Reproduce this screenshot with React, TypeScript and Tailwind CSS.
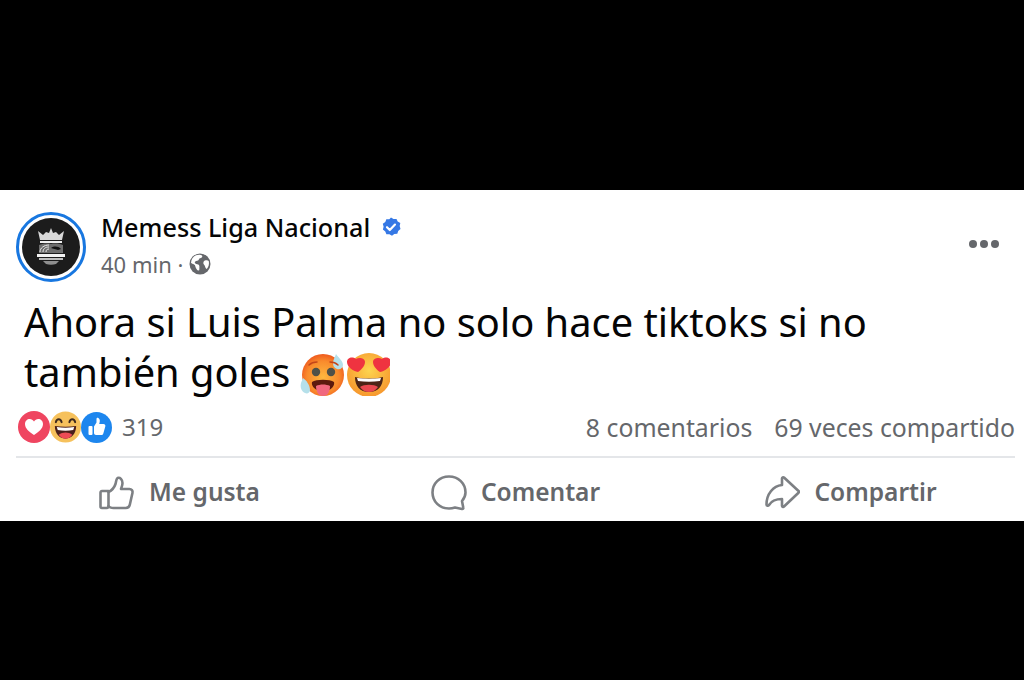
import { ReactNode } from "react";

const font = { fontFamily: '"Noto Sans", "Open Sans", sans-serif' };

function Avatar() {
  return (
    <div className="flex h-[70px] w-[70px] shrink-0 items-center justify-center rounded-full border-[3px] border-[#1877e0] bg-white">
      <div className="flex h-[58px] w-[58px] items-center justify-center rounded-full bg-[#1c1c1c]">
        <svg viewBox="0 0 30 38" className="h-[38px] w-[30px] blur-[0.4px]">
          <path d="M2 3l5 4 3-3 3 1 2-5 2 5 3-1 3 3 5-4-2 9H4z" fill="#d8d8d8" />
          <path d="M4 13h22v2H4z" fill="#f0f0f0" />
          <path d="M3 17c2-1 8-2 12-1 4-1 10 0 12 1v8H3z" fill="#6e6e6e" />
          <path d="M4 24c0-4 4-7 9-7M7 24c0-3 2-5 6-5M10 24c0-2 1-3 3-3" stroke="#e8e8e8" strokeWidth="1" fill="none" />
          <path d="M15 20c3-2 7-2 10 1l-3 1c-2-1-5-1-7-2z" fill="#111" />
          <rect x="1" y="26" width="28" height="3" fill="#f2f2f2" />
          <rect x="3" y="30" width="24" height="2" fill="#bdbdbd" />
          <path d="M7 33h16l-3 3c-3 1-7 1-10 0z" fill="#8f8f8f" />
        </svg>
      </div>
    </div>
  );
}

function VerifiedBadge() {
  return (
    <svg viewBox="0 0 20 20" className="h-[20px] w-[20px]">
      <path
        d="M10 0.5l2.500 1.600 3-.2 1.200 2.700 2.600 1.500-.6 2.900.8 2.900-2.300 2-.9 2.800-3 .2-2.300 1.900-2.600-1.500-3-.1-1.100-2.800-2.400-1.800.7-2.900-.8-2.900 2.500-1.700 1-2.800 3 0z"
        fill="#3578e5"
      />
      <path d="M6 10.200l2.800 2.800 5.200-5.400" fill="none" stroke="#fff" strokeWidth="2.200" strokeLinecap="round" strokeLinejoin="round" />
    </svg>
  );
}

function Globe() {
  return (
    <svg viewBox="0 0 22 22" className="h-[22px] w-[22px]">
      <circle cx="11" cy="11" r="10.500" fill="#65676b" />
      <path d="M7 2.200c2.500-.9 5-.6 6 .2 1 1.200-.5 2.600-2 2.800-1 .2-1 1.600-2 2.200-1 .6-2.800.3-3.200 1.600-.3 1 1 2 2.400 2.200 1.600.2 2.400 1.200 2.200 2.800-.2 1.400.4 3.600-.8 3.600-1.500 0-3-2.600-3.400-4.600C6.400 11.500 3.600 11 2 10 2.200 6.500 4 3.400 7 2.200z" fill="#fff" />
      <path d="M16 7.500c1.200-.4 3-.2 3.800.8.600 2.800-.2 5.700-2 7.700-1.200-.3-1.500-2-2-3.200-.5-1.200-1.800-2-1.400-3.400.3-1 .6-1.600 1.600-1.900z" fill="#fff" />
    </svg>
  );
}

function Dots() {
  return (
    <div className="flex gap-[3px]">
      <span className="h-[8px] w-[8px] rounded-full bg-[#65676b]" />
      <span className="h-[8px] w-[8px] rounded-full bg-[#65676b]" />
      <span className="h-[8px] w-[8px] rounded-full bg-[#65676b]" />
    </div>
  );
}

function SweatHotFace() {
  return (
    <svg viewBox="0 -3 46 48" className="h-[48px] w-[46px]">
      <defs>
        <radialGradient id="hot" cx="50%" cy="55%" r="55%">
          <stop offset="0%" stopColor="#fdb83f" />
          <stop offset="70%" stopColor="#f98a2c" />
          <stop offset="100%" stopColor="#ef5a1e" />
        </radialGradient>
      </defs>
      <circle cx="25" cy="24" r="21" fill="url(#hot)" />
      <path d="M38 3c2 3 7 7 7 11 0 3-3 5-6 4-3-1-4-3-4-6 0-3 2-6 3-9z" fill="#b5e0ea" />
      <path d="M5 27c3 2 7 7 7 12 0 3-3 4-5 3-4-2-5-6-4-10z" fill="#b5e0ea" />
      <circle cx="18" cy="21" r="4.200" fill="#4f5148" />
      <circle cx="33" cy="21" r="4.200" fill="#4f5148" />
      <path d="M11 14c2-2 5-3 8-3M40 14c-2-2-5-3-8-3" stroke="#c4461a" strokeWidth="1.500" fill="none" strokeLinecap="round" />
      <path d="M14 31c4-3 18-3 22 0 1 4-3 7-5 8H19c-2-1-6-4-5-8z" fill="#5c1a0e" />
      <path d="M18 35c4-2 10-2 14 0 0 5-2 10-7 10s-7-5-7-10z" fill="#f0687f" />
    </svg>
  );
}

function HeartEyesFace() {
  return (
    <svg viewBox="0 -3 46 48" className="h-[48px] w-[46px]">
      <defs>
        <radialGradient id="yel" cx="50%" cy="40%" r="65%">
          <stop offset="0%" stopColor="#fdd44f" />
          <stop offset="100%" stopColor="#f6922a" />
        </radialGradient>
      </defs>
      <circle cx="25" cy="24" r="22" fill="url(#yel)" />
      <path d="M14 21C9 20 3 16 3 11c0-4 5-6 9-3 3-2 9-1 9 3 0 4-4 8-7 10z" fill="#ef3340" />
      <path d="M36 21c5-1 11-5 11-10 0-4-5-6-9-3-3-2-9-1-9 3 0 4 4 8 7 10z" fill="#ef3340" />
      <path d="M11 26c9 2 19 2 28 0 0 9-5 15-14 15s-14-6-14-15z" fill="#4c2416" />
      <path d="M16 36c4-3 14-3 18 0-2 3-5 5-9 5s-7-2-9-5z" fill="#e9484f" />
      <path d="M13 27c8 1 16 1 24 0l-1 3c-7 1-15 1-22 0z" fill="#fff" />
    </svg>
  );
}

function LoveReaction() {
  return (
    <div className="flex h-[32px] w-[32px] items-center justify-center rounded-full bg-[#ef4560]">
      <svg viewBox="0 0 20 20" className="h-[20px] w-[20px]">
        <path d="M10 18C5 14.500 1 11.500 1 7c0-3 2.200-5 4.700-5C7.500 2 9 3 10 4.500 11 3 12.500 2 14.300 2 16.800 2 19 4 19 7c0 4.500-4 7.500-9 11z" fill="#fff" />
      </svg>
    </div>
  );
}

function HahaReaction() {
  return (
    <div className="h-[32px] w-[31px]">
      <svg viewBox="0 0 32 32" className="h-[32px] w-[31px]">
        <circle cx="16" cy="16" r="16" fill="#f6c15c" />
        <path d="M6 11c1-4 5-4 6 0M20 11c1-4 5-4 6 0" stroke="#3e2a1e" strokeWidth="2" fill="none" strokeLinecap="round" />
        <path d="M5 15c7 1 15 1 22 0 0 8-5 13-11 13S5 23 5 15z" fill="#4a1f1a" />
        <path d="M9 24c4-3 10-3 14 0-2 3-4 4-7 4s-5-1-7-4z" fill="#ee4b55" />
        <path d="M7 16c6 1 12 1 18 0l-1 3c-5 1-11 1-16 0z" fill="#fff" />
      </svg>
    </div>
  );
}

function LikeReaction() {
  return (
    <div className="flex h-[31px] w-[31px] items-center justify-center rounded-full bg-[#1d86ee]">
      <svg viewBox="0 0 20 20" className="h-[20px] w-[20px]">
        <rect x="1.500" y="9" width="4" height="9" rx="1" fill="#fff" />
        <path d="M7 9.500l2.500-4V2.200C9.500 1 10.400.6 11.300 1c1.400.7 1.800 2.400 1.400 4l-.5 2h4.300c1.300 0 2.200 1.200 1.800 2.400l-2 7c-.3.9-1 1.600-2 1.600H9c-1.100 0-2-.9-2-2z" fill="#fff" />
      </svg>
    </div>
  );
}

function LikeIcon() {
  return (
    <svg viewBox="0 0 36 36" className="h-[36px] w-[37px]" fill="none" stroke="#7d8084" strokeWidth="2.600" strokeLinejoin="round" strokeLinecap="round">
      <path d="M10 16H3.500c-.8 0-1.500.7-1.500 1.500v14c0 .8.700 1.500 1.500 1.500H8c1.100 0 2-.9 2-2z" />
      <path d="M10 17c4-2 6-5 7-8 .6-2 .6-5 2-6 2.500-1 5 1.500 5 5 0 2.500-1 4.500-1.500 6H31c2 0 3.500 1.800 3 3.800l-2.700 12c-.4 2-2 3.200-4 3.200H15c-2.200 0-5-1-5-2" />
    </svg>
  );
}

function CommentIcon() {
  return (
    <svg viewBox="0 0 36 36" className="h-[36px] w-[36px]" fill="none" stroke="#7d8084" strokeWidth="2.600" strokeLinejoin="round" strokeLinecap="round">
      <path d="M18 1.500C8.500 1.500 1.500 8.500 1.500 17.500S8.500 33.500 18 33.500c2.500 0 4.500-.5 6-1l7 1.500c1 .2 1.500-.5 1.300-1.300L31 26c2.200-2.500 3.500-5.500 3.500-8.500C34.500 8.500 27.500 1.500 18 1.500z" />
    </svg>
  );
}

function ShareIcon() {
  return (
    <svg viewBox="0 0 36 36" className="h-[36px] w-[36px]" fill="none" stroke="#7d8084" strokeWidth="2.600" strokeLinejoin="round" strokeLinecap="round">
      <path d="M20 2.500L34.500 16c.5.500.5 1.200 0 1.700L20 31.500c-.8.700-2 .2-2-.8V24c-6 0-10 1-13 6-.8 1.200-2.500 1-2.500-.5C2.500 19 9 11 18 10V3.500c0-1 1.200-1.600 2-1z" />
    </svg>
  );
}

function ActionButton({ icon, label }: { icon: ReactNode; label: string }) {
  return (
    <button className="flex items-center gap-[14px] text-[24.500px] font-semibold leading-none text-[#65676b]">
      {icon}
      <span>{label}</span>
    </button>
  );
}

export default function App() {
  return (
    <div className="h-[680px] w-[1024px] overflow-hidden bg-black pt-[190px]" style={font}>
      <div className="flex h-[331px] flex-col bg-white pl-[16px] pr-[9px]">
        <div className="flex pt-[22px]">
          <Avatar />
          <div className="ml-[15px] flex flex-col">
            <div className="-mt-[1px] flex items-center gap-[11px]">
              <span className="text-[25.200px] font-medium leading-[32px] text-[#050505]">Memess Liga Nacional</span>
              <VerifiedBadge />
            </div>
            <div className="mt-[7px] flex items-center gap-[6px] text-[22px] leading-[28px] text-[#65676b]">
              <span>40 min ·</span>
              <Globe />
            </div>
          </div>
          <div className="ml-auto mr-[16px] mt-[28px]">
            <Dots />
          </div>
        </div>

        <p className="ml-[8px] mt-[15px] text-[39.800px] leading-[50px] text-[#050505]">
          Ahora si Luis Palma no solo hace tiktoks si no
          <br />
          <span className="inline-flex items-center">
            también goles
            <span className="ml-[8px] inline-flex">
              <SweatHotFace />
              <HeartEyesFace />
            </span>
          </span>
        </p>

        <div className="mt-[13px] flex items-center justify-between">
          <div className="ml-[2px] flex items-center">
            <LoveReaction />
            <HahaReaction />
            <LikeReaction />
            <span className="ml-[10px] text-[24px] leading-[34px] text-[#65676b]">319</span>
          </div>
          <div className="flex gap-[22px] text-[24.800px] leading-[34px] text-[#65676b]">
            <span>8 comentarios</span>
            <span>69 veces compartido</span>
          </div>
        </div>

        <div className="mt-[12px] border-t-2 border-[#e4e6e9]" />

        <div className="grid flex-1 grid-cols-3 items-center pt-[6px]">
          <div className="flex justify-center pr-[7px]">
            <ActionButton icon={<LikeIcon />} label="Me gusta" />
          </div>
          <div className="flex justify-center">
            <ActionButton icon={<CommentIcon />} label="Comentar" />
          </div>
          <div className="flex justify-center pl-[4px]">
            <ActionButton icon={<ShareIcon />} label="Compartir" />
          </div>
        </div>
      </div>
    </div>
  );
}
